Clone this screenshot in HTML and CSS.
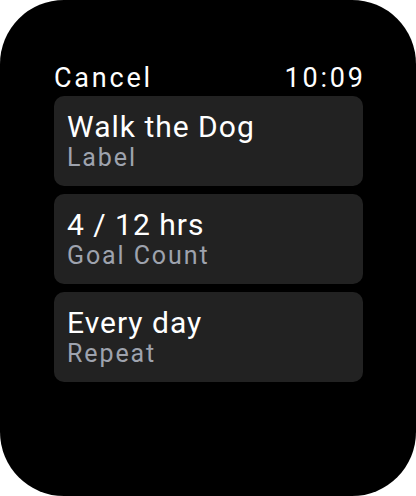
FILE: index.html
```html
<!DOCTYPE html>
<html>
<head>
<meta charset="utf-8">
<link rel="stylesheet" href="styles.css">
</head>
<body>
<div class="watch">
  <div class="header">
    <span class="cancel">Cancel</span>
    <span class="time">10:09</span>
  </div>
  <div class="list">
    <div class="card">
      <div class="title">Walk the Dog</div>
      <div class="sub">Label</div>
    </div>
    <div class="card">
      <div class="title">4 / 12 hrs</div>
      <div class="sub">Goal Count</div>
    </div>
    <div class="card">
      <div class="title">Every day</div>
      <div class="sub">Repeat</div>
    </div>
  </div>
</div>
</body>
</html>
```
FILE: styles.css
```css
html, body {
  margin: 0;
  padding: 0;
  background: #fff;
}
.watch {
  width: 416px;
  height: 496px;
  background: #000;
  border-radius: 64px;
  box-sizing: border-box;
  padding: 63px 53px 0 54px;
  font-family: Roboto, "Noto Sans", sans-serif;
  color: #fff;
}
.header {
  display: flex;
  justify-content: space-between;
  font-size: 27px;
  line-height: 30px;
  height: 30px;
  letter-spacing: 2.8px;
  margin-bottom: 3px;
}
.time {
  margin-right: -2.8px;
}
.list {
  display: flex;
  flex-direction: column;
  gap: 8px;
}
.card {
  background: #222222;
  border-radius: 10px;
  height: 90px;
  box-sizing: border-box;
  padding: 16px 13px 0 13px;
}
.title {
  font-size: 30px;
  line-height: 30px;
  letter-spacing: 1px;
  color: #fff;
}
.sub {
  font-size: 25px;
  line-height: 32px;
  letter-spacing: 1.9px;
  color: #9ea3ae;
}
```
